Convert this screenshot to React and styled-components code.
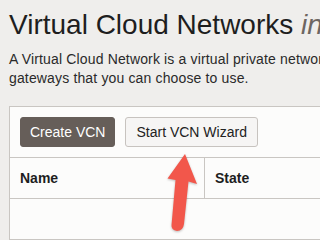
import React from 'react';
import styled, { createGlobalStyle } from 'styled-components';

const GlobalStyle = createGlobalStyle`
  html, body {
    margin: 0;
    padding: 0;
    background: #efeeec;
    font-family: "Liberation Sans", Arial, sans-serif;
    overflow: hidden;
  }
`;

const Page = styled.div`
  position: relative;
  width: 320px;
  height: 240px;
  overflow: hidden;
  padding-left: 9px;
  box-sizing: border-box;
`;

const Title = styled.h1`
  margin: 0;
  padding-top: 10px;
  font-size: 28px;
  font-weight: 400;
  line-height: 30px;
  color: #1e1e1e;
  white-space: nowrap;
  em {
    color: #6d6662;
    font-style: italic;
  }
`;

const Intro = styled.p`
  margin: 10px 0 0 0;
  font-size: 14px;
  line-height: 19px;
  letter-spacing: 0.15px;
  color: #2a2a2a;
  white-space: nowrap;
`;

const Panel = styled.div`
  margin-top: 18px;
  width: 400px;
  background: #fcfcfb;
  border: 1px solid #c9c6c2;
`;

const Toolbar = styled.div`
  display: flex;
  gap: 10px;
  padding: 10px 10px;
`;

const Button = styled.button`
  height: 30px;
  padding: 0 ${p => (p.primary ? '9px' : '10px')};
  border-radius: 3px;
  font-family: "Liberation Sans", Arial, sans-serif;
  font-size: 14px;
  border: 1px solid ${p => (p.primary ? '#665e59' : '#c7c3bf')};
  background: ${p => (p.primary ? '#665e59' : '#f6f5f4')};
  color: ${p => (p.primary ? '#ffffff' : '#222222')};
`;

const Table = styled.div`
  border-top: 1px solid #c9c6c2;
`;

const Row = styled.div`
  display: grid;
  grid-template-columns: 194px 1fr;
  height: 40px;
  border-bottom: 1px solid #c9c6c2;
`;

const HeadCell = styled.div`
  display: flex;
  align-items: center;
  padding-left: 10px;
  font-size: 14px;
  font-weight: 700;
  color: #1e1e1e;
  & + & {
    border-left: 1px solid #c9c6c2;
  }
`;

const Arrow = styled.svg`
  position: absolute;
  left: 160px;
  top: 150px;
  filter: drop-shadow(0 1px 1px rgba(0, 0, 0, 0.25));
`;

export default function App() {
  return (
    <>
      <GlobalStyle />
      <Page>
        <Title>
          Virtual Cloud Networks <em>in ocinetworking</em>
        </Title>
        <Intro>
          A Virtual Cloud Network is a virtual private network that you set up in Oracle data centers.
          <br />
          gateways that you can choose to use.
        </Intro>
        <Panel>
          <Toolbar>
            <Button primary>Create VCN</Button>
            <Button>Start VCN Wizard</Button>
          </Toolbar>
          <Table>
            <Row>
              <HeadCell>Name</HeadCell>
              <HeadCell>State</HeadCell>
            </Row>
            <Row />
          </Table>
        </Panel>
        <Arrow width="50" height="90" viewBox="160 150 50 90">
          <path
            d="M185,154 L197,184 L188.5,181.5 L184,224 Q183,231 177,231 Q171,230 171.5,225 L175.5,180 L167.5,178.5 Z"
            fill="#f2574b"
          />
        </Arrow>
      </Page>
    </>
  );
}
